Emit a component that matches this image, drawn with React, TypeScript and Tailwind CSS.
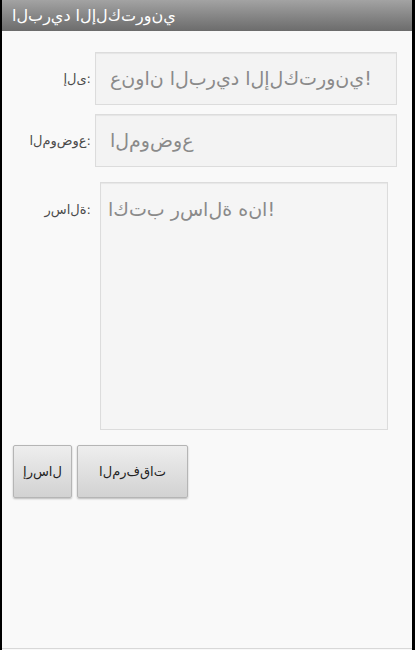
const ar = "whitespace-nowrap [unicode-bidi:bidi-override] [direction:ltr] [font-feature-settings:'init'_0,'medi'_0,'fina'_0]";

function Field({ label, placeholder }: { label: string; placeholder: string }) {
  return (
    <div className="flex items-center">
      <div className={`w-[91px] pr-[2px] text-right text-[13px] text-[#4a4a4a] ${ar}`}>{label}</div>
      <div className="ml-[2px] flex h-[53px] w-[302px] items-center overflow-hidden border border-[#dcdcdc] bg-[#f3f3f3] px-[14px] shadow-[inset_0_1px_1px_rgba(0,0,0,0.06)]">
        <span className={`text-[19px] tracking-[-0.3px] text-[#8a8a8a] ${ar}`}>{placeholder}</span>
      </div>
    </div>
  );
}

export default function App() {
  return (
    <div className="flex h-[650px] w-[415px] bg-black font-['DejaVu_Sans',sans-serif]">
      <div className="ml-[2px] mr-[3px] flex flex-1 flex-col bg-[#f9f9f9]">
        <div className="flex h-[31px] items-center bg-gradient-to-b from-[#a3a3a3] to-[#6c6c6c] px-[10px]">
          <span className={`text-[16px] tracking-[-0.3px] text-white ${ar}`}>البريد الإلكتروني</span>
        </div>

        <div className="flex flex-1 flex-col border-b border-[#d8d8d8] pt-[21px]">
          <Field label="إلى:" placeholder="عنوان البريد الإلكتروني!" />
          <div className="h-[9px]" />
          <Field label="الموضوع:" placeholder="الموضوع" />

          <div className="mt-[15px] flex items-start">
            <div className={`mt-[18px] w-[91px] pr-[2px] text-right text-[13px] text-[#4a4a4a] ${ar}`}>رسالة:</div>
            <div className="ml-[7px] h-[248px] w-[288px] border border-[#dcdcdc] bg-[#f5f5f5] px-[7px] pt-[12px] shadow-[inset_0_1px_1px_rgba(0,0,0,0.06)]">
              <span className={`text-[19px] tracking-[-0.3px] text-[#8a8a8a] ${ar}`}>اكتب رسالة هنا!</span>
            </div>
          </div>

          <div className="ml-[11px] mt-[15px] flex gap-[5px]">
            <button className="flex h-[53px] w-[59px] items-center justify-center rounded-[2px] border border-[#b5b5b5] bg-gradient-to-b from-[#eeeeee] to-[#d2d2d2] shadow-[0_1px_2px_rgba(0,0,0,0.25)]">
              <span className={`text-[13px] text-[#222] ${ar}`}>إرسال</span>
            </button>
            <button className="flex h-[53px] w-[111px] items-center justify-center rounded-[2px] border border-[#b5b5b5] bg-gradient-to-b from-[#eeeeee] to-[#d2d2d2] shadow-[0_1px_2px_rgba(0,0,0,0.25)]">
              <span className={`text-[13px] text-[#222] ${ar}`}>المرفقات</span>
            </button>
          </div>
        </div>
        <div className="h-[1px]" />
      </div>
    </div>
  );
}
